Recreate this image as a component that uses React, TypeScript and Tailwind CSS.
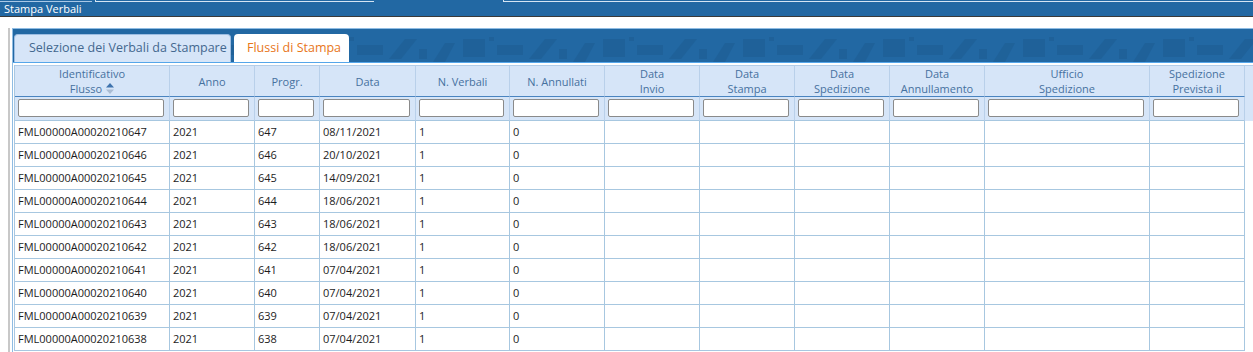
import React from 'react';

const rows = [
  ['FML00000A00020210647', '2021', '647', '08/11/2021'],
  ['FML00000A00020210646', '2021', '646', '20/10/2021'],
  ['FML00000A00020210645', '2021', '645', '14/09/2021'],
  ['FML00000A00020210644', '2021', '644', '18/06/2021'],
  ['FML00000A00020210643', '2021', '643', '18/06/2021'],
  ['FML00000A00020210642', '2021', '642', '18/06/2021'],
  ['FML00000A00020210641', '2021', '641', '07/04/2021'],
  ['FML00000A00020210640', '2021', '640', '07/04/2021'],
  ['FML00000A00020210639', '2021', '639', '07/04/2021'],
  ['FML00000A00020210638', '2021', '638', '07/04/2021'],
];

const columns = [
  { w: 'w-[155px]', label: ['Identificativo', 'Flusso'], sort: true },
  { w: 'w-[85px]', label: ['Anno'] },
  { w: 'w-[65px]', label: ['Progr.'] },
  { w: 'w-[96px]', label: ['Data'] },
  { w: 'w-[94px]', label: ['N. Verbali'] },
  { w: 'w-[95px]', label: ['N. Annullati'] },
  { w: 'w-[95px]', label: ['Data', 'Invio'] },
  { w: 'w-[95px]', label: ['Data', 'Stampa'] },
  { w: 'w-[95px]', label: ['Data', 'Spedizione'] },
  { w: 'w-[95px]', label: ['Data', 'Annullamento'] },
  { w: 'w-[165px]', label: ['Ufficio', 'Spedizione'] },
  { w: 'w-[95px]', label: ['Spedizione', 'Prevista il'] },
];

function SortIcon() {
  return (
    <svg width="8" height="11" viewBox="0 0 8 11" className="ml-[4px] inline-block">
      <path d="M4 0 L8 4.5 L0 4.5 Z" fill="#3e73ad" />
      <path d="M4 11 L8 6.5 L0 6.5 Z" fill="#a9bcd3" />
    </svg>
  );
}

function BandPattern() {
  // subtle darker decorative shapes behind the tabs
  const shapes = [];
  for (let i = 0; i < 9; i++) {
    const x = i * 140;
    shapes.push(
      <g key={i} fill="#1c5a8f" opacity="0.45">
        <path d={`M${x} 33 L${x + 12} 14 L${x + 22} 14 L${x + 12} 33 Z`} />
        <rect x={x + 30} y={10} width={22} height={18} />
        <rect x={x + 56} y={8} width={5} height={4} />
        <rect x={x + 64} y={16} width={26} height={10} />
        <path d={`M${x + 96} 30 L${x + 112} 10 L${x + 124} 10 L${x + 108} 30 Z`} />
        <rect x={x + 126} y={20} width={8} height={10} />
      </g>
    );
  }
  return (
    <svg className="absolute inset-0" width="1300" height="33" viewBox="0 0 1300 33">
      {shapes}
    </svg>
  );
}

export default function App() {
  return (
    <div className="w-[1253px] h-[352px] overflow-hidden bg-white font-['Open_Sans',sans-serif] text-[11px] text-[#1c1c1c]">
      {/* window title bar */}
      <div className="h-[16px] bg-[#2268a3] relative">
        <div className="flex h-[2px]">
          <div className="w-[92px] border-b border-[#a9c8e6]" />
          <div className="w-[3px]" />
          <div className="w-[279px] border-b border-l border-[#d5e5f3]" />
          <div className="w-[129px]" />
          <div className="flex-1 border-b border-l border-[#d5e5f3]" />
        </div>
        <div className="pl-[4px] text-white text-[11px] leading-[13px]">Stampa Verbali</div>
      </div>
      <div className="h-[1px] bg-[#3a3a3a]" />

      <div className="flex pt-[11px]">
        <div className="w-[8px]" />
        <div className="w-[2px] h-[340px] bg-[#c8c8c8]" />
        <div className="w-[2px]" />

        {/* tab panel */}
        <div className="flex-1 min-w-0 overflow-hidden border-l border-t border-[#8fbce3]">
          <div className="relative h-[34px] bg-[#2268a3] border-b border-[#55a6ea] overflow-hidden">
            <BandPattern />
            <div className="relative flex items-end gap-[3px] h-full pl-[1px] pt-[5px]">
              <div className="h-[28px] w-[217px] rounded-t-[4px] border border-b-0 border-[#9cbde2] bg-[#d6e5f8] pl-[14px] flex items-center text-[12.5px] text-[#44688f]">
                Selezione dei Verbali da Stampare
              </div>
              <div className="h-[28px] w-[115px] rounded-t-[4px] bg-white pl-[13px] flex items-center text-[12.5px] text-[#e8761a]">
                Flussi di Stampa
              </div>
            </div>
          </div>
          <div className="h-[2px] bg-white" />

          {/* grid */}
          <div className="pl-[1px]">
            <div className="border-l border-[#a9c8e2]">
              {/* header */}
              <div className="flex bg-[#d6e5f8] border-t border-[#b3cde8]">
                {columns.map((c, i) => (
                  <div
                    key={i}
                    className={`${c.w} shrink-0 h-[31px] border-r border-b border-r-[#b9d0ea] border-b-[#4a84c0] flex flex-col items-center justify-center text-center leading-[15px] text-[#46719f]`}
                  >
                    {c.label.length === 2 ? (
                      <>
                        <span>{c.label[0]}</span>
                        <span className="flex items-center">
                          {c.label[1]}
                          {c.sort && <SortIcon />}
                        </span>
                      </>
                    ) : (
                      <span>{c.label[0]}</span>
                    )}
                  </div>
                ))}
                <div className="flex-1 h-[31px]" />
              </div>

              {/* filters */}
              <div className="flex bg-[#d6e5f8]">
                {columns.map((c, i) => (
                  <div
                    key={i}
                    className={`${c.w} shrink-0 h-[24px] border-r border-b border-r-[#b9d0ea] border-b-[#a7c7e0] pl-[3px] pr-[5px] pt-[2px]`}
                  >
                    <div className="h-[18px] w-full bg-white border border-[#8a8a8a] rounded-[2px]" />
                  </div>
                ))}
                <div className="flex-1 h-[24px]" />
              </div>

              {/* rows */}
              {rows.map((r, ri) => (
                <div key={ri} className="flex bg-white">
                  {columns.map((c, i) => (
                    <div
                      key={i}
                      className={`${c.w} shrink-0 h-[23px] border-r border-b border-[#a7c7e0] pl-[3px] flex items-center`}
                    >
                      {i < 4 ? r[i] : i === 4 ? '1' : i === 5 ? '0' : ''}
                    </div>
                  ))}
                  <div className="flex-1 h-[23px]" />
                </div>
              ))}
            </div>
          </div>
        </div>
      </div>
    </div>
  );
}
